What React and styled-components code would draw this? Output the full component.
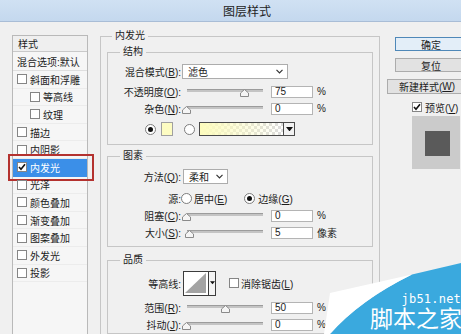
import React from "react";
import styled, { createGlobalStyle } from "styled-components";

const GlobalStyle = createGlobalStyle`
  html, body {
    margin: 0;
    padding: 0;
    background: #f0f0f0;
  }
  body {
    font-family: "Liberation Sans", "Noto Sans CJK SC", sans-serif;
    color: #1c1c1c;
  }
  * {
    box-sizing: border-box;
  }
`;

const sideItems = [
  { name: "斜面和浮雕" },
  { name: "等高线", indent: true },
  { name: "纹理", indent: true },
  { name: "描边" },
  { name: "内阴影" },
  { name: "内发光", checked: true, selected: true },
  { name: "光泽" },
  { name: "颜色叠加" },
  { name: "渐变叠加" },
  { name: "图案叠加" },
  { name: "外发光" },
  { name: "投影" },
];

function Check({ checked }) {
  return (
    <CheckBox>
      {checked && (
        <svg width="8" height="8" viewBox="0 0 8 8">
          <path d="M1 4 L3 6.3 L7 1.2" fill="none" stroke="#111" strokeWidth="1.6" />
        </svg>
      )}
    </CheckBox>
  );
}

function Slider({ pct }) {
  return (
    <SliderWrap>
      <Track />
      <Thumb style={{ left: 4 + pct * 78 - 4.5 }}>
        <svg width="9" height="8" viewBox="0 0 9 8">
          <polygon
            points="4.5,0.5 8.5,4 8.5,7.5 0.5,7.5 0.5,4"
            fill="#f5f5f5"
            stroke="#8a8a8a"
          />
        </svg>
      </Thumb>
    </SliderWrap>
  );
}

function Chevron() {
  return (
    <svg width="7" height="5" viewBox="0 0 7 5">
      <path d="M0.5 0.8 L3.5 3.8 L6.5 0.8" fill="none" stroke="#333" strokeWidth="1.2" />
    </svg>
  );
}

function Triangle({ w = 7 }) {
  return (
    <svg width={w} height={w / 2 + 1} viewBox="0 0 8 5">
      <polygon points="0,0 8,0 4,5" fill="#111" />
    </svg>
  );
}

function SliderRow({ label, pct, value, unit }) {
  return (
    <Row $h={17}>
      <Label>{label}</Label>
      <Slider pct={pct} />
      <NumInput>{value}</NumInput>
      <Unit>{unit}</Unit>
    </Row>
  );
}

export default function App() {
  return (
    <>
      <GlobalStyle />
      <Window>
        <TitleBar>图层样式</TitleBar>
        <Body>
          <Sidebar>
            <SideHeader>样式</SideHeader>
            <SideBlend>混合选项:默认</SideBlend>
            {sideItems.map((item) => (
              <SideItem key={item.name} $indent={item.indent} $selected={item.selected}>
                <Check checked={item.checked} />
                <span>{item.name}</span>
              </SideItem>
            ))}
          </Sidebar>

          <Main>
            <OuterLegend>内发光</OuterLegend>

            <Group $mt={0} $pb={3}>
              <InnerLegend>结构</InnerLegend>
              <Row $h={24}>
                <Label>
                  混合模式(<u>B</u>):
                </Label>
                <Select $w={106}>
                  <span>滤色</span>
                  <Chevron />
                </Select>
              </Row>
              <SliderRow label={<>不透明度(<u>O</u>):</>} pct={0.75} value="75" unit="%" />
              <SliderRow label={<>杂色(<u>N</u>):</>} pct={0} value="0" unit="%" />
              <ColorRow>
                <Radio $on />
                <Swatch />
                <Radio $gap={11} />
                <GradientBox />
                <DropBtn>
                  <Triangle />
                </DropBtn>
              </ColorRow>
            </Group>

            <Group $mt={4} $pb={5}>
              <InnerLegend>图素</InnerLegend>
              <Row $h={26}>
                <Label>
                  方法(<u>Q</u>):
                </Label>
                <Select $w={45} $ml={1}>
                  <span>柔和</span>
                  <Chevron />
                </Select>
              </Row>
              <Row $h={18}>
                <Label $mr={0}>源:</Label>
                <Radio />
                <RadioText>
                  居中(<u>E</u>)
                </RadioText>
                <Radio $on $gap={17} />
                <RadioText $ml={3}>
                  边缘(<u>G</u>)
                </RadioText>
              </Row>
              <SliderRow label={<>阻塞(<u>C</u>):</>} pct={0} value="0" unit="%" />
              <SliderRow label={<>大小(<u>S</u>):</>} pct={0.05} value="5" unit="像素" />
            </Group>

            <Group $mt={6} $pb={0}>
              <InnerLegend>品质</InnerLegend>
              <Row $h={32}>
                <Label>等高线:</Label>
                <ContourPick>
                  <ContourBox>
                    <svg width="23" height="22" viewBox="0 0 23 22">
                      <polygon points="1,21 22,1 22,21" fill="#a3a3a3" />
                    </svg>
                  </ContourBox>
                  <ContourDrop>
                    <Triangle w={5} />
                  </ContourDrop>
                </ContourPick>
                <AliasCheck>
                  <Check />
                  <span>
                    消除锯齿(<u>L</u>)
                  </span>
                </AliasCheck>
              </Row>
              <SliderRow label={<>范围(<u>R</u>):</>} pct={0.5} value="50" unit="%" />
              <SliderRow label={<>抖动(<u>J</u>):</>} pct={0} value="0" unit="%" />
            </Group>
          </Main>

          <Actions>
            <Button $primary $w={72}>
              确定
            </Button>
            <Button $w={72} $mt={7}>
              复位
            </Button>
            <Button $w={80} $mt={7} $h={15}>
              新建样式(<u>W</u>)
            </Button>
            <PreviewCheck>
              <Check checked />
              <span>
                预览(<u>V</u>)
              </span>
            </PreviewCheck>
            <PreviewBox>
              <PreviewSquare />
            </PreviewBox>
          </Actions>
        </Body>

        <Watermark>
          <svg width="141" height="74" viewBox="0 0 141 74">
            <path d="M141 3 L141 74 L10 74 Q40 40 92 14.5 Z" fill="#3aa9de" />
            <path d="M10 33 L92 14.5 Q40 40 10 74 L4 74 Z" fill="#ffffff" />
          </svg>
          <WmSite>jb51.net</WmSite>
          <WmName>脚本之家</WmName>
        </Watermark>
      </Window>
    </>
  );
}

const Window = styled.div`
  position: relative;
  width: 461px;
  height: 334px;
  overflow: hidden;
  background: #f0f0f0;
  display: flex;
  flex-direction: column;
  font-size: 10px;
`;

const TitleBar = styled.div`
  height: 22px;
  flex-shrink: 0;
  display: flex;
  align-items: center;
  padding-left: 223px;
  font-size: 12px;
  color: #222;
  background: linear-gradient(#d0e1f3, #c4d8ee);
  border-bottom: 1px solid #a9bdd6;
`;

const Body = styled.div`
  flex: 1;
  display: flex;
  align-items: flex-start;
  min-height: 0;
`;

const Sidebar = styled.div`
  width: 76px;
  height: 310px;
  flex-shrink: 0;
  margin: 13px 0 0 12px;
  border: 1px solid #b9b9b9;
  background: #f6f6f6;
`;

const SideHeader = styled.div`
  height: 16px;
  display: flex;
  align-items: center;
  padding-left: 5px;
  border-bottom: 1px solid #c9c9c9;
  background: #efefef;
`;

const SideBlend = styled.div`
  height: 19px;
  display: flex;
  align-items: center;
  padding-left: 4px;
  border-bottom: 1px solid #dedede;
  white-space: nowrap;
`;

const SideItem = styled.div`
  position: relative;
  height: 17.6px;
  display: flex;
  align-items: center;
  gap: 3px;
  padding-left: ${(p) => (p.$indent ? 17 : 4)}px;
  white-space: nowrap;
  background: ${(p) => (p.$selected ? "#3b8fe8" : "transparent")};
  color: ${(p) => (p.$selected ? "#fff" : "inherit")};
  border-bottom: 1px solid ${(p) => (p.$selected ? "#3b8fe8" : "#ececec")};

  &::after {
    content: "";
    display: ${(p) => (p.$selected ? "block" : "none")};
    position: absolute;
    top: -5px;
    bottom: -5px;
    left: -5px;
    right: -7px;
    border: 2px solid #b4322f;
  }
`;

const CheckBox = styled.span`
  width: 10px;
  height: 10px;
  flex-shrink: 0;
  display: inline-flex;
  align-items: center;
  justify-content: center;
  background: #fff;
  border: 1px solid #858585;
`;

const Main = styled.fieldset`
  width: 280px;
  flex-shrink: 0;
  margin: 7px 0 0 12px;
  padding: 2px 6px 0;
  min-width: 0;
  border: 1px solid #c6c6c6;
  height: 340px;
`;

const OuterLegend = styled.legend`
  margin-left: 5px;
  padding: 0 3px;
  line-height: 14px;
  font-size: 10px;
`;

const Group = styled.fieldset`
  margin: ${(p) => p.$mt}px 0 0;
  padding: 0 0 ${(p) => p.$pb}px;
  min-width: 0;
  border: 1px solid #c6c6c6;
`;

const InnerLegend = styled.legend`
  margin-left: 12px;
  padding: 0 3px;
  line-height: 14px;
  font-size: 10px;
`;

const Row = styled.div`
  height: ${(p) => p.$h}px;
  display: flex;
  align-items: center;
  white-space: nowrap;
`;

const Label = styled.span`
  width: 73px;
  flex-shrink: 0;
  text-align: right;
  margin-right: ${(p) => (p.$mr ?? 1)}px;
`;

const Select = styled.div`
  width: ${(p) => p.$w}px;
  height: 15px;
  margin-left: ${(p) => p.$ml || 0}px;
  display: flex;
  align-items: center;
  justify-content: space-between;
  padding: 0 4px 0 5px;
  background: #fff;
  border: 1px solid #acacac;
`;

const SliderWrap = styled.div`
  position: relative;
  width: 86px;
  height: 12px;
  flex-shrink: 0;
`;

const Track = styled.div`
  margin: 3px 5px 0;
  height: 3px;
  background: #c4c4c4;
  border-top: 1px solid #9c9c9c;
`;

const Thumb = styled.div`
  position: absolute;
  top: 3px;
  width: 9px;
  height: 8px;
  display: flex;
`;

const NumInput = styled.div`
  width: 42px;
  height: 12px;
  margin-left: 3px;
  padding-left: 3px;
  display: flex;
  align-items: center;
  background: #fff;
  border: 1px solid #b4b4b4;
  font-size: 10px;
`;

const Unit = styled.span`
  margin-left: 4px;
`;

const ColorRow = styled.div`
  height: 24px;
  display: flex;
  align-items: center;
  padding-left: 37px;
`;

const Radio = styled.span`
  width: 11px;
  height: 11px;
  flex-shrink: 0;
  margin-left: ${(p) => p.$gap || 0}px;
  border-radius: 50%;
  background: #fff;
  border: 1px solid #7d7d7d;
  display: inline-flex;
  align-items: center;
  justify-content: center;

  &::after {
    content: "";
    display: ${(p) => (p.$on ? "block" : "none")};
    width: 5px;
    height: 5px;
    border-radius: 50%;
    background: #111;
  }
`;

const RadioText = styled.span`
  margin-left: ${(p) => p.$ml || 2}px;
`;

const Swatch = styled.span`
  width: 12px;
  height: 14px;
  margin-left: 5px;
  background: #fdfcc2;
  border: 1px solid #a0a0a0;
`;

const GradientBox = styled.span`
  width: 85px;
  height: 14px;
  margin-left: 4px;
  border: 1px solid #4a4a4a;
  background: linear-gradient(to right, #fdfcbd, rgba(253, 252, 189, 0)),
    repeating-conic-gradient(#dcdcdc 0 25%, #ffffff 0 50%) 0 0 / 6px 6px;
`;

const DropBtn = styled.span`
  width: 11px;
  height: 14px;
  display: inline-flex;
  align-items: center;
  justify-content: center;
  background: #f2f2f2;
  border: 1px solid #4a4a4a;
  border-left: none;
`;

const ContourPick = styled.div`
  display: flex;
  margin-left: 1px;
  border: 1px solid #3c3c3c;
`;

const ContourBox = styled.div`
  width: 24px;
  height: 23px;
  background: #fff;
  display: flex;
`;

const ContourDrop = styled.div`
  width: 7px;
  display: flex;
  align-items: center;
  justify-content: center;
  background: #f4f4f4;
  border-left: 1px solid #3c3c3c;
`;

const AliasCheck = styled.label`
  display: flex;
  align-items: center;
  gap: 2px;
  margin-left: 13px;
`;

const Actions = styled.div`
  width: 80px;
  flex-shrink: 0;
  margin: 15px 0 0 7px;
  display: flex;
  flex-direction: column;
  align-items: flex-end;
`;

const Button = styled.div`
  width: ${(p) => p.$w}px;
  height: ${(p) => p.$h || 14}px;
  margin-top: ${(p) => p.$mt || 0}px;
  display: flex;
  align-items: center;
  justify-content: center;
  white-space: nowrap;
  background: ${(p) => (p.$primary ? "#e3eef8" : "#e2e2e2")};
  border: 1px solid ${(p) => (p.$primary ? "#4f88b8" : "#acacac")};
`;

const PreviewCheck = styled.label`
  align-self: flex-start;
  margin: 6px 0 0 25px;
  height: 14px;
  display: flex;
  align-items: center;
  gap: 3px;
  white-space: nowrap;
`;

const PreviewBox = styled.div`
  align-self: flex-start;
  width: 48px;
  height: 53px;
  margin: 2px 0 0 25px;
  padding: 15px 0 0 13px;
  background: #cbcbcb;
`;

const PreviewSquare = styled.div`
  width: 25px;
  height: 25px;
  background: #5a5a5a;
`;

const Watermark = styled.div`
  position: absolute;
  right: 0;
  bottom: 0;
  width: 141px;
  height: 74px;
  display: flex;
  flex-direction: column;
  align-items: flex-end;
  padding-top: 33px;
  color: #fff;
  pointer-events: none;

  svg {
    position: absolute;
    inset: 0;
  }
`;

const WmSite = styled.div`
  position: relative;
  font-family: "DejaVu Sans Mono", monospace;
  font-size: 12px;
  line-height: 13px;
  letter-spacing: 0.2px;
`;

const WmName = styled.div`
  position: relative;
  font-family: "Noto Sans CJK SC", sans-serif;
  font-size: 23px;
  line-height: 23px;
  margin-right: -1px;
`;
